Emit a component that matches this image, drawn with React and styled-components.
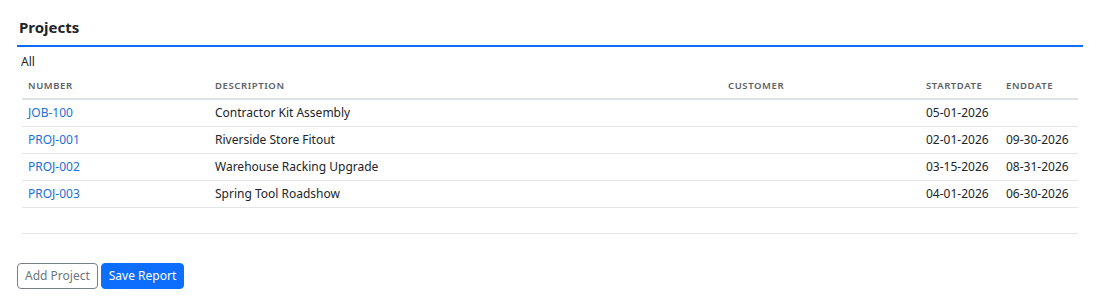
import React from "react";
import styled, { createGlobalStyle } from "styled-components";

const Global = createGlobalStyle`
  html, body { margin: 0; padding: 0; background: #fff; }
  body { font-family: "Noto Sans", "Open Sans", sans-serif; color: #212529; }
  * { box-sizing: border-box; }
`;

const Page = styled.div`
  padding: 17px 17px 0 17px;
`;

const Title = styled.h2`
  margin: 0;
  font-size: 15px;
  font-weight: 700;
  line-height: 20px;
  padding: 0 0 0 2px;
  height: 30px;
  border-bottom: 2px solid #0d6efd;
`;

const Section = styled.div`
  padding: 0 5px 0 4px;
`;

const Filter = styled.div`
  font-size: 12px;
  line-height: 18px;
  padding-top: 6px;
`;

const Table = styled.table`
  width: 1056px;
  margin-left: 1px;
  margin-top: 3px;
  border-collapse: collapse;
  table-layout: fixed;
  font-size: 12px;
`;

const Th = styled.th`
  text-align: left;
  font-size: 9.5px;
  font-weight: 600;
  letter-spacing: 0.6px;
  color: #5c6166;
  text-transform: uppercase;
  padding: 4px 6px 5px 6px;
  height: 25px;
  border-bottom: 2px solid #dee2e6;
`;

const Td = styled.td`
  padding: 0 6px;
  height: 27px;
  line-height: 18px;
  border-bottom: 1px solid #e3e5e8;
  white-space: nowrap;
`;

const Link = styled.a`
  color: #1a6fd8;
  text-decoration: none;
`;

const FooterLine = styled.div`
  margin-left: 1px;
  width: 1056px;
  height: 26px;
  border-bottom: 1px solid #e3e5e8;
`;

const Actions = styled.div`
  display: flex;
  gap: 3px;
  padding-top: 29px;
`;

const Button = styled.button`
  font-family: inherit;
  font-size: 12px;
  line-height: 18px;
  height: 26px;
  padding: 0 7px;
  border-radius: 4px;
  cursor: pointer;
  border: 1px solid ${(p) => (p.$primary ? "#0d6efd" : "#7a7f85")};
  background: ${(p) => (p.$primary ? "#0d6efd" : "#fff")};
  color: ${(p) => (p.$primary ? "#fff" : "#6c757d")};
`;

const cols = [187, 513, 198, 80, 78];

const rows = [
  ["JOB-100", "Contractor Kit Assembly", "", "05-01-2026", ""],
  ["PROJ-001", "Riverside Store Fitout", "", "02-01-2026", "09-30-2026"],
  ["PROJ-002", "Warehouse Racking Upgrade", "", "03-15-2026", "08-31-2026"],
  ["PROJ-003", "Spring Tool Roadshow", "", "04-01-2026", "06-30-2026"],
];

export default function App() {
  return (
    <>
      <Global />
      <Page>
        <Title>Projects</Title>
        <Section>
          <Filter>All</Filter>
          <Table>
            <colgroup>
              {cols.map((w, i) => (
                <col key={i} style={{ width: w }} />
              ))}
            </colgroup>
            <thead>
              <tr>
                <Th>Number</Th>
                <Th>Description</Th>
                <Th>Customer</Th>
                <Th>StartDate</Th>
                <Th>EndDate</Th>
              </tr>
            </thead>
            <tbody>
              {rows.map((r) => (
                <tr key={r[0]}>
                  <Td>
                    <Link href="#">{r[0]}</Link>
                  </Td>
                  <Td>{r[1]}</Td>
                  <Td>{r[2]}</Td>
                  <Td>{r[3]}</Td>
                  <Td>{r[4]}</Td>
                </tr>
              ))}
            </tbody>
          </Table>
          <FooterLine />
        </Section>
        <Actions>
          <Button>Add Project</Button>
          <Button $primary>Save Report</Button>
        </Actions>
      </Page>
    </>
  );
}
